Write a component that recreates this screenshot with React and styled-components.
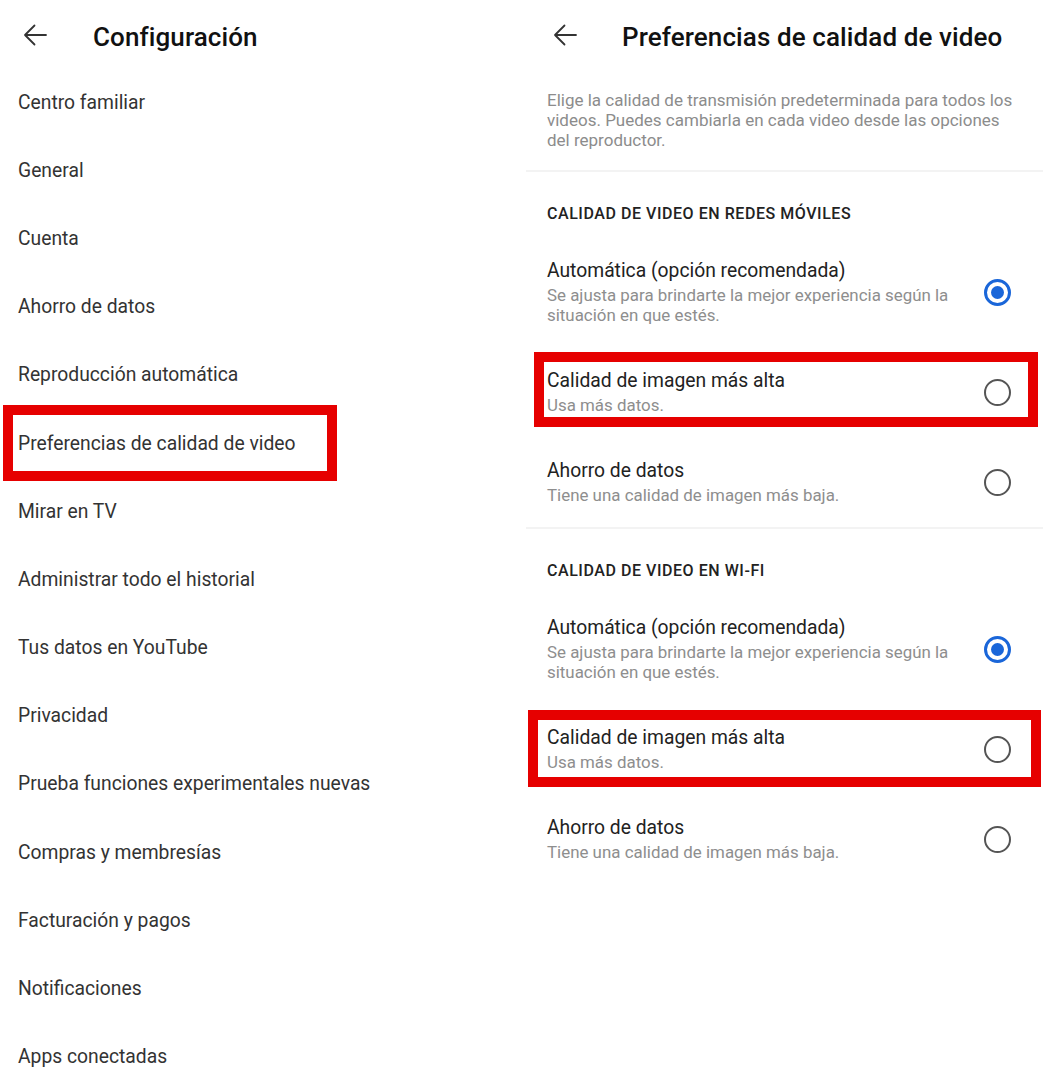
import React from "react";
import styled, { createGlobalStyle } from "styled-components";

const GlobalStyle = createGlobalStyle`
  html, body {
    margin: 0;
    padding: 0;
    background: #ffffff;
  }
  body {
    font-family: Roboto, "Noto Sans", "Liberation Sans", sans-serif;
    -webkit-font-smoothing: antialiased;
  }
`;

const Page = styled.div`
  display: flex;
  width: 1043px;
  height: 1080px;
  overflow: hidden;
  background: #fff;
`;

const LeftPanel = styled.div`
  width: 526px;
  flex-shrink: 0;
  display: flex;
  flex-direction: column;
`;

const RightPanel = styled.div`
  flex: 1;
  display: flex;
  flex-direction: column;
`;

const Header = styled.div`
  height: 68px;
  flex-shrink: 0;
  display: flex;
  align-items: center;
  padding-left: ${(p) => p.$pad}px;
  box-sizing: border-box;
`;

const BackButton = styled.div`
  width: 24px;
  height: 24px;
  display: flex;
  align-items: center;
  justify-content: center;
  margin-top: 2px;
`;

const Title = styled.h1`
  margin: 0 0 0 ${(p) => p.$gap}px;
  padding-top: 5px;
  font-size: 26px;
  font-weight: 500;
  color: #111;
  letter-spacing: 0.1px;
`;

const MenuItem = styled.div`
  position: relative;
  height: 68.2px;
  flex-shrink: 0;
  display: flex;
  align-items: center;
  padding-left: 18px;
  font-size: 19.3px;
  color: #333;

  ${(p) =>
    p.$marked &&
    `
    &::after {
      content: "";
      position: absolute;
      left: 3px;
      top: -4px;
      width: 334px;
      height: 76px;
      box-sizing: border-box;
      border: 10px solid #e60000;
    }
  `}
`;

const Description = styled.p`
  margin: 0;
  padding: 22px 20px 20px 21px;
  font-size: 17px;
  line-height: 20px;
  color: #8c8c8c;
`;

const Divider = styled.div`
  height: 2px;
  flex-shrink: 0;
  background: #f3f3f3;
`;

const SectionHeader = styled.div`
  padding: 32px 20px 13px 21px;
  font-size: 16px;
  line-height: 20px;
  font-weight: 500;
  color: #222;
  letter-spacing: 0.55px;
`;

const OptionRow = styled.div`
  position: relative;
  flex-shrink: 0;
  display: flex;
  align-items: center;
  padding: 22px 32px 22px 21px;

  ${(p) =>
    p.$box &&
    `
    &::after {
      content: "";
      position: absolute;
      left: ${p.$box.l}px;
      top: ${p.$box.t}px;
      width: ${p.$box.w}px;
      height: ${p.$box.h}px;
      box-sizing: border-box;
      border: 10px solid #e60000;
    }
  `}
`;

const OptionText = styled.div`
  flex: 1;
`;

const OptionTitle = styled.div`
  font-size: 19.3px;
  line-height: 24px;
  color: #222;
`;

const OptionSub = styled.div`
  margin-top: 2px;
  font-size: 16.9px;
  line-height: 20px;
  color: #8e8e8e;
`;

const Radio = styled.div`
  width: 27px;
  height: 27px;
  box-sizing: border-box;
  border-radius: 50%;
  border: ${(p) => (p.$checked ? "3px solid #1a66d9" : "2.5px solid #555")};
  display: flex;
  align-items: center;
  justify-content: center;
  flex-shrink: 0;

  &::before {
    content: "";
    width: 13px;
    height: 13px;
    border-radius: 50%;
    background: ${(p) => (p.$checked ? "#1a66d9" : "transparent")};
  }
`;

const BackArrow = () => (
  <svg width="24" height="24" viewBox="0 0 24 24" fill="none">
    <path
      d="M23 12H2M11.5 2.5L2 12l9.5 9.5"
      stroke="#333"
      strokeWidth="1.8"
      strokeLinecap="round"
      strokeLinejoin="round"
    />
  </svg>
);

const menu = [
  "Centro familiar",
  "General",
  "Cuenta",
  "Ahorro de datos",
  "Reproducción automática",
  "Preferencias de calidad de video",
  "Mirar en TV",
  "Administrar todo el historial",
  "Tus datos en YouTube",
  "Privacidad",
  "Prueba funciones experimentales nuevas",
  "Compras y membresías",
  "Facturación y pagos",
  "Notificaciones",
  "Apps conectadas",
];

const options = [
  {
    title: "Automática (opción recomendada)",
    sub: ["Se ajusta para brindarte la mejor experiencia según la", "situación en que estés."],
    checked: true,
  },
  { title: "Calidad de imagen más alta", sub: ["Usa más datos."], marked: true },
  { title: "Ahorro de datos", sub: ["Tiene una calidad de imagen más baja."] },
];

const sections = [
  { name: "CALIDAD DE VIDEO EN REDES MÓVILES", box: { l: 8, t: 5, w: 504, h: 75 } },
  { name: "CALIDAD DE VIDEO EN WI-FI", box: { l: 2, t: 6, w: 513, h: 77 } },
];

export default function App() {
  return (
    <>
      <GlobalStyle />
      <Page>
        <LeftPanel>
          <Header $pad={23}>
            <BackButton>
              <BackArrow />
            </BackButton>
            <Title $gap={46}>Configuración</Title>
          </Header>
          {menu.map((m) => (
            <MenuItem key={m} $marked={m === "Preferencias de calidad de video"}>
              {m}
            </MenuItem>
          ))}
        </LeftPanel>

        <RightPanel>
          <Header $pad={27}>
            <BackButton>
              <BackArrow />
            </BackButton>
            <Title $gap={45}>Preferencias de calidad de video</Title>
          </Header>
          <Description>
            Elige la calidad de transmisión predeterminada para todos los
            <br />
            videos. Puedes cambiarla en cada video desde las opciones
            <br />
            del reproductor.
          </Description>
          {sections.map((s) => (
            <React.Fragment key={s.name}>
              <Divider />
              <SectionHeader>{s.name}</SectionHeader>
              {options.map((o) => (
                <OptionRow key={o.title} $box={o.marked ? s.box : null}>
                  <OptionText>
                    <OptionTitle>{o.title}</OptionTitle>
                    <OptionSub>
                      {o.sub.map((line, i) => (
                        <React.Fragment key={i}>
                          {i > 0 && <br />}
                          {line}
                        </React.Fragment>
                      ))}
                    </OptionSub>
                  </OptionText>
                  <Radio $checked={o.checked} />
                </OptionRow>
              ))}
            </React.Fragment>
          ))}
        </RightPanel>
      </Page>
    </>
  );
}
